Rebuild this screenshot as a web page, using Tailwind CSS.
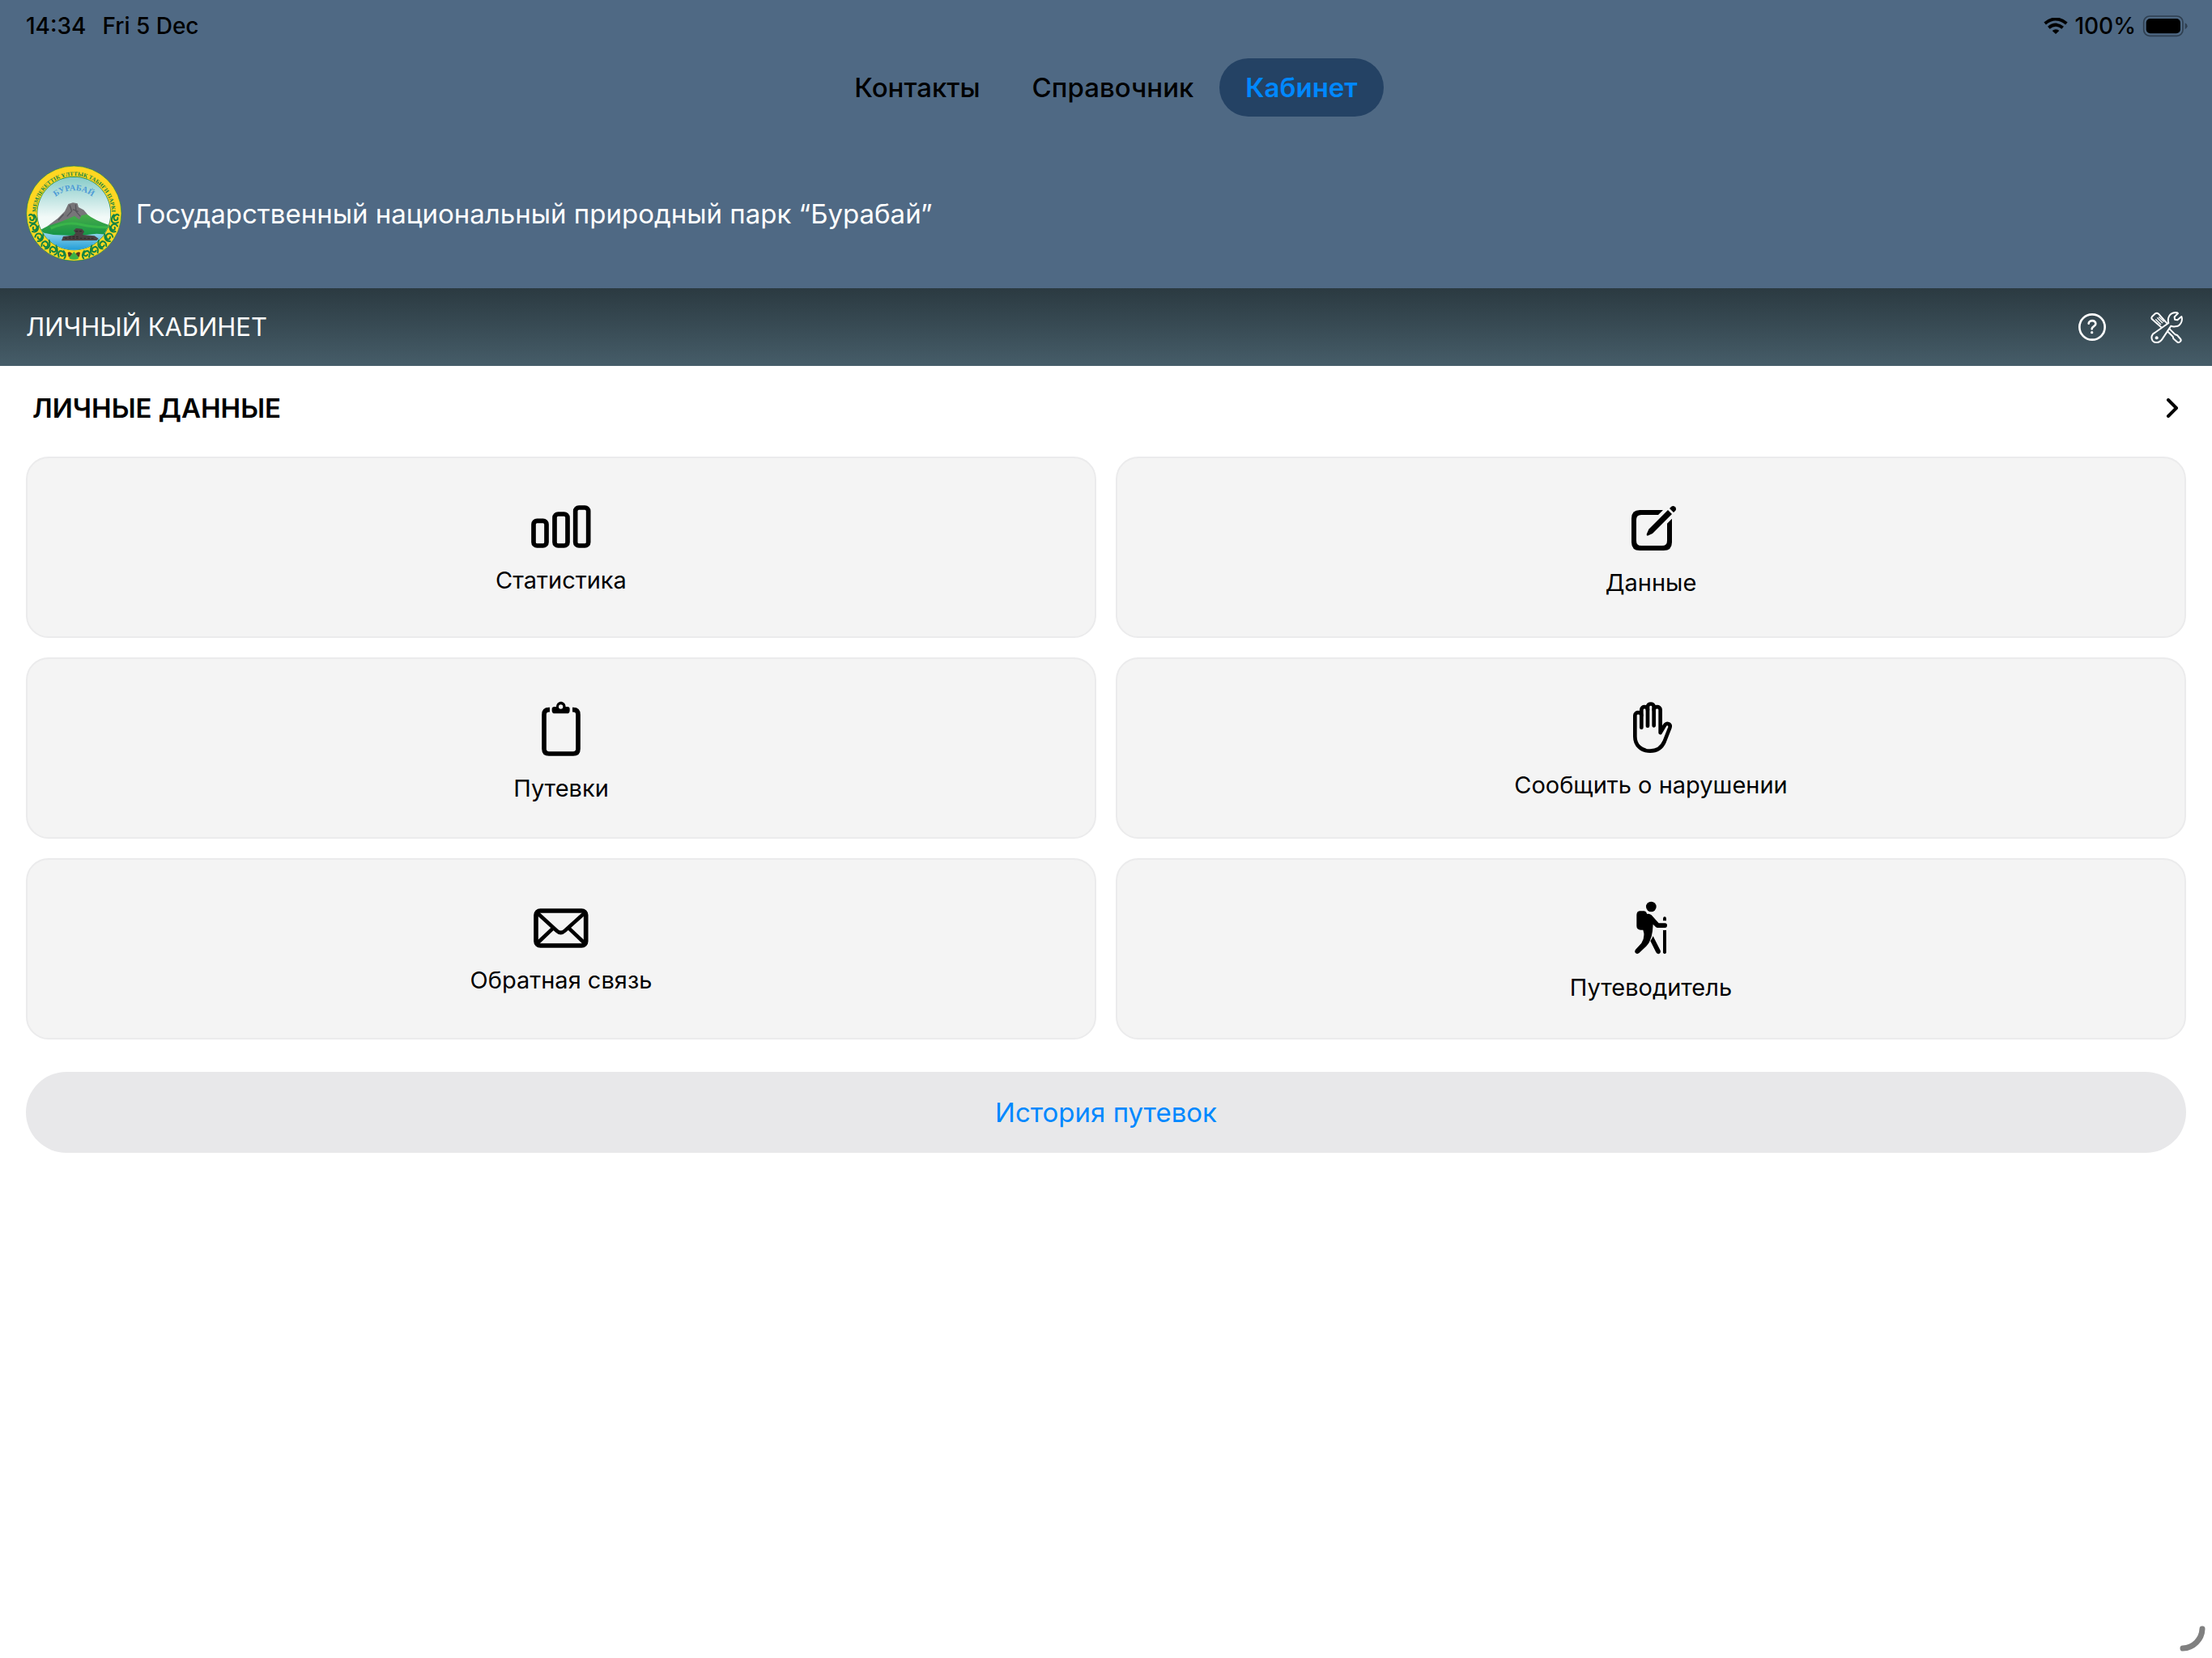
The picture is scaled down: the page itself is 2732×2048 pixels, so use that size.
<!DOCTYPE html>
<html lang="ru">
  <head>
    <meta charset="UTF-8" />
    <meta name="viewport" content="width=device-width, initial-scale=1.0" />
    <title>Личный кабинет</title>
    <script src="https://cdn.jsdelivr.net/npm/@tailwindcss/browser@4"></script>
  </head>
  <body class="min-h-screen bg-white font-['Inter',sans-serif] text-black">
    <header class="bg-[#4f6984]">
      <!-- Status bar -->
      <div
        class="flex h-16 items-center justify-between pr-[30px] pl-8 text-[28px] font-medium"
      >
        <div class="flex gap-5">
          <span>14:34</span>
          <span>Fri 5 Dec</span>
        </div>
        <div class="flex items-center gap-2">
          <svg class="h-5 w-[30px]" viewBox="0 0 90 60" fill="none">
            <path
              d="M5 21 Q45 -12 85 21"
              stroke="#000"
              stroke-width="12"
            />
            <path
              d="M19 37 Q45 15 71 37"
              stroke="#000"
              stroke-width="12"
            />
            <path d="M45 60 L32 48 Q45 37 58 48 Z" fill="#000" />
          </svg>
          <span>100%</span>
          <svg class="h-7 w-14" viewBox="0 0 168 84" fill="none">
            <rect
              x="5"
              y="6"
              width="145"
              height="73"
              rx="22"
              stroke="#2f3f50"
              stroke-width="5"
            />
            <rect x="14" y="15" width="127" height="55" rx="15" fill="#000" />
            <path d="M158 31 Q167 36 167 43 Q167 50 158 55 Z" fill="#2f3f50" />
          </svg>
        </div>
      </div>

      <nav
        class="flex justify-center pt-2 text-[33px] leading-10 font-medium"
      >
        <a href="#contacts" class="rounded-full px-8 py-4">Контакты</a>
        <a href="#directory" class="rounded-full px-8 py-4">Справочник</a>
        <a
          href="#cabinet"
          aria-current="page"
          class="rounded-full bg-[#244264] px-8 py-4 font-semibold text-[#0088ff]"
          >Кабинет</a
        >
      </nav>

      <div class="flex items-center gap-4 px-8 pt-15 pb-8 text-white">
        <svg class="size-[120px] shrink-0" viewBox="38 42 360 360">
          <defs>
            <linearGradient id="sky" x1="0" y1="0" x2="0" y2="1">
              <stop offset="0" stop-color="#86cbc9" />
              <stop offset="0.55" stop-color="#f2faf8" />
            </linearGradient>
            <linearGradient id="lake" x1="0" y1="0" x2="0" y2="1">
              <stop offset="0" stop-color="#9fdcec" />
              <stop offset="1" stop-color="#1d9bd8" />
            </linearGradient>
            <linearGradient id="hill" x1="0" y1="0" x2="0" y2="1">
              <stop offset="0" stop-color="#4fb04a" />
              <stop offset="1" stop-color="#159447" />
            </linearGradient>
            <clipPath id="view"><circle cx="216" cy="221" r="135" /></clipPath>
            <path id="rim" d="M76 221 A140 140 0 0 1 356 221" />
            <path id="arch" d="M138 168 A110 110 0 0 1 294 168" />
          </defs>
          <circle
            cx="216"
            cy="221"
            r="176"
            fill="#ffd622"
            stroke="#138443"
            stroke-width="2"
          />
          <circle cx="216" cy="221" r="137" fill="#138443" />
          <g clip-path="url(#view)">
            <rect x="80" y="85" width="272" height="272" fill="url(#sky)" />
            <rect x="80" y="286" width="272" height="72" fill="url(#lake)" />
            <path
              d="M80 288 L130 262 L215 214 L262 222 Q290 246 352 266 L352 300 L300 296 L230 304 L140 300 Z"
              fill="url(#hill)"
            />
            <path
              d="M118 268 L155 240 L182 213 L195 186 L212 181 L229 184 L233 198 L252 208 L266 224 L244 228 L236 244 L218 230 L196 240 L160 254 Z"
              fill="#777579"
            />
            <path
              d="M200 190 L208 212 L190 232 M222 188 L224 214 L240 232 M178 224 L158 246 M212 206 L232 214"
              stroke="#55545a"
              stroke-width="4"
              fill="none"
            />
            <path
              d="M130 276 Q190 250 240 262 T352 272"
              stroke="#39b54a"
              stroke-width="9"
              fill="none"
            />
            <path
              d="M170 322 L176 306 L214 302 L222 294 L215 284 L224 276 L246 278 L254 288 L248 300 L292 304 L307 314 L300 321 Z"
              fill="#4a4142"
            />
            <path
              d="M182 313 H290 M222 287 H248 M196 307 H232"
              stroke="#2b2628"
              stroke-width="3"
              stroke-dasharray="9 5"
            />
          </g>
          <g fill="none" stroke="#138443" stroke-width="6" stroke-linecap="round">
            <g id="scrolls">
              <path d="M50 228 Q54 222 62 227 Q74 236 64 246 Q52 248 54 237 M52 254 Q68 262 76 250 Q78 234 68 226" />
              <path d="M55 268 Q62 256 74 263 Q84 274 73 283 Q61 283 65 272 M62 288 Q84 294 84 268" />
              <path d="M72 308 Q76 292 90 296 Q102 304 93 316 Q82 319 82 308 M82 324 Q104 326 102 298" />
              <path d="M96 342 Q96 326 110 324 Q124 330 118 343 Q108 349 104 339 M110 352 Q132 350 124 320" />
              <path d="M128 366 Q124 350 136 344 Q150 346 149 360 Q140 368 134 359 M144 374 Q162 368 150 340" />
              <path d="M160 382 Q154 368 164 360 Q180 360 180 374 Q172 384 166 374 M180 388 Q190 376 178 360" />
            </g>
            <use href="#scrolls" transform="translate(432 0) scale(-1 1)" />
          </g>
          <path
            d="M193 366 Q200 360 210 370 L204 382 H196 Z M239 366 Q232 360 222 370 L228 382 H236 Z"
            fill="#5b3a1e"
          />
          <path
            d="M216 362 L234 384 Q234 392 216 392 Q198 392 198 384 Z"
            fill="#3fb244"
          />
          <text
            font-family="Liberation Serif"
            font-weight="700"
            font-size="21"
            fill="#138443"
            text-anchor="middle"
          >
            <textPath href="#rim" startOffset="50%">
              МЕМЛЕКЕТТІК ҰЛТТЫҚ ТАБИҒИ ПАРКІ
            </textPath>
          </text>
          <text
            font-family="Liberation Serif"
            font-weight="700"
            font-size="31"
            fill="#4d9bd6"
            text-anchor="middle"
          >
            <textPath href="#arch" startOffset="50%">БУРАБАЙ</textPath>
          </text>
        </svg>
        <p class="text-[33px] leading-10">
          Государственный национальный природный парк “Бурабай”
        </p>
      </div>
    </header>

    <div
      class="flex h-24 items-center justify-between bg-linear-to-b from-[#2b3a41] to-[#465d69] px-8 text-white"
    >
      <h1 class="text-[31px] leading-10">ЛИЧНЫЙ КАБИНЕТ</h1>
      <div class="flex gap-[50px]">
        <button type="button" aria-label="Помощь">
          <svg
            class="size-11"
            viewBox="186 126 132 132"
            fill="none"
            stroke="currentColor"
            stroke-linecap="round"
            stroke-linejoin="round"
          >
            <circle cx="252" cy="192" r="47" stroke-width="8" />
            <path
              d="M239 179 C240 165 265 164 265 180 C265 190 251 189 251 199"
              stroke-width="8"
            />
            <circle cx="251" cy="212" r="5" fill="currentColor" stroke="none" />
          </svg>
        </button>
        <button type="button" aria-label="Настройки">
          <svg
            class="size-11"
            viewBox="468 126 132 132"
            fill="none"
            stroke="currentColor"
            stroke-width="6"
            stroke-linecap="round"
            stroke-linejoin="round"
          >
            <path
              d="M508 193 L474 163 Q470 158 474 153 L486 142 Q492 138 498 143 L530 179"
            />
            <path
              d="M488 164 L506 182 M494 158 L512 176 M500 155 L517 171"
              stroke-width="4"
            />
            <path
              d="M531 208 L551 227 L553 235 L568 248 Q574 251 578 246 Q583 241 580 237 L567 222 L560 220 L539 199"
            />
            <path
              d="M535 177 C530 160 537 140 560 138 Q568 138 570 141 L557 154 L558 164 L568 166 L583 153 C589 170 578 190 560 190 Q550 191 544 188 L512 236 C500 254 482 251 476 243 C468 230 474 217 484 213 Z"
            />
            <circle cx="491" cy="232" r="6" fill="currentColor" stroke="none" />
          </svg>
        </button>
      </div>
    </div>

    <main class="px-8 pb-8">
      <a
        href="#personal"
        class="flex items-center justify-between px-2 pt-8 pb-10"
      >
        <h2 class="text-[33px] leading-10 font-semibold">ЛИЧНЫЕ ДАННЫЕ</h2>
        <svg
          class="size-6"
          viewBox="504 456 72 72"
          fill="none"
          stroke="currentColor"
          stroke-width="12"
          stroke-linecap="round"
          stroke-linejoin="round"
        >
          <path d="M534 462 L564 492 L534 522" />
        </svg>
      </a>

      <div class="grid grid-cols-2 gap-6 text-[29px] leading-8">
        <a
          href="#stats"
          class="flex h-56 flex-col items-center justify-center rounded-[28px] border-2 border-[#ebebec] bg-[#f4f4f4] pb-1"
        >
          <svg
            class="h-[86px] w-20"
            viewBox="99 45 240 258"
            fill="none"
            stroke="currentColor"
            stroke-width="17"
          >
            <rect x="117" y="130" width="48" height="92" rx="13" />
            <rect x="195" y="105" width="48" height="117" rx="13" />
            <rect x="272" y="81" width="48" height="141" rx="13" />
          </svg>
          Статистика
        </a>

        <a
          href="#data"
          class="flex h-56 flex-col items-center justify-center rounded-[28px] border-2 border-[#ebebec] bg-[#f4f4f4] pb-1"
        >
          <svg class="h-[92px] w-20" viewBox="87 36 240 276" fill="currentColor">
            <path
              d="M252 90 H166 Q135 90 135 121 V209 Q135 240 166 240 H254 Q285 240 285 209 V122 L267 140 V204 Q267 222 249 222 H171 Q153 222 153 204 V126 Q153 108 171 108 H234 Z"
            />
            <path
              d="M270 90 L285 105 L213 177 L195 185 Q190 185 191 180 L199 161 Z"
            />
            <path
              d="M276 84 L283 77 Q290 72 297 79 Q303 86 298 92 L291 99 Z"
            />
          </svg>
          Данные
        </a>

        <a
          href="#permits"
          class="flex h-56 flex-col items-center justify-center rounded-[28px] border-2 border-[#ebebec] bg-[#f4f4f4] pb-1"
        >
          <svg class="h-[104px] w-20" viewBox="99 12 240 312">
            <path
              d="M177 80 H174 Q156 80 156 98 V225 Q156 243 174 243 H264 Q282 243 282 225 V98 Q282 80 264 80 H261"
              fill="none"
              stroke="currentColor"
              stroke-width="17"
            />
            <path
              fill="currentColor"
              fill-rule="evenodd"
              d="M194 69 H201 C202 44 235 44 236 69 H243 Q251 69 251 77 V83 Q251 94 240 94 H196 Q185 94 185 83 V77 Q185 69 194 69 Z M218 61 A8 8 0 1 0 218 77 A8 8 0 1 0 218 61 Z"
            />
          </svg>
          Путевки
        </a>

        <a
          href="#report"
          class="flex h-56 flex-col items-center justify-center rounded-[28px] border-2 border-[#ebebec] bg-[#f4f4f4] pb-1"
        >
          <svg
            class="h-24 w-20"
            viewBox="87 24 240 288"
            fill="none"
            stroke="currentColor"
            stroke-width="14"
            stroke-linecap="round"
            stroke-linejoin="round"
          >
            <path
              d="M172 146 V101 C172 87 148 87 148 101 V179 C148 212 172 233 204 233 C232 233 247 221 257 198 L277 147 C282 132 264 126 258 138 L242 165 V80 C242 66 218 66 218 80 V139"
            />
            <path d="M218 80 V69 C218 55 195 55 195 69 V140" />
            <path d="M195 80 C195 66 172 66 172 80 V101" />
          </svg>
          Сообщить о нарушении
        </a>

        <a
          href="#feedback"
          class="flex h-56 flex-col items-center justify-center rounded-[28px] border-2 border-[#ebebec] bg-[#f4f4f4] pb-1"
        >
          <svg
            class="h-[82px] w-20"
            viewBox="279 39 240 246"
            fill="none"
            stroke="currentColor"
          >
            <rect x="306" y="75" width="185" height="129" rx="16" stroke-width="17" />
            <path
              d="M311 83 L383 149 Q398 163 413 149 L486 83 M311 195 L369 140 M486 195 L428 140"
              stroke-width="14"
            />
          </svg>
          Обратная связь
        </a>

        <a
          href="#guide"
          class="flex h-56 flex-col items-center justify-center rounded-[28px] border-2 border-[#ebebec] bg-[#f4f4f4] pb-1"
        >
          <svg class="h-[100px] w-20" viewBox="267 12 240 300" fill="currentColor">
            <circle cx="388" cy="60" r="19" />
            <path
              d="M345 76 H362 Q369 77 373 87 Q382 85 389 91 L416 121 H439 Q447 121 447 129 Q447 138 439 138 H412 Q408 138 404 134 L395 125 L393 150 Q391 172 381 191 Q377 199 370 206 L343 232 Q336 237 330 232 Q325 226 330 219 L352 195 Q363 178 361 158 L358 146 H349 Q334 145 334 131 V90 Q335 77 345 76 Z"
            />
            <path
              d="M395 169 L422 222 Q425 230 418 234 Q411 237 406 229 L385 187 Q391 179 395 169 Z"
            />
            <path d="M432 112 V103 Q433 97 438 97 Q443 97 444 103 V112 Z" />
            <path d="M432 147 H444 V229 Q443 235 438 235 Q433 235 432 229 Z" />
          </svg>
          Путеводитель
        </a>
      </div>

      <button
        type="button"
        class="mt-10 w-full rounded-full bg-[#e8e8ea] py-[30px] text-[33px] leading-10 text-[#0088ff]"
      >
        История путевок
      </button>
    </main>

    <!-- Window corner grip -->
    <svg
      class="fixed right-2 bottom-2 size-8"
      viewBox="0 0 32 32"
      fill="none"
      stroke="#808080"
      stroke-width="7"
      stroke-linecap="round"
    >
      <path d="M28 4 A25 25 0 0 1 4 28" />
    </svg>
  </body>
</html>
